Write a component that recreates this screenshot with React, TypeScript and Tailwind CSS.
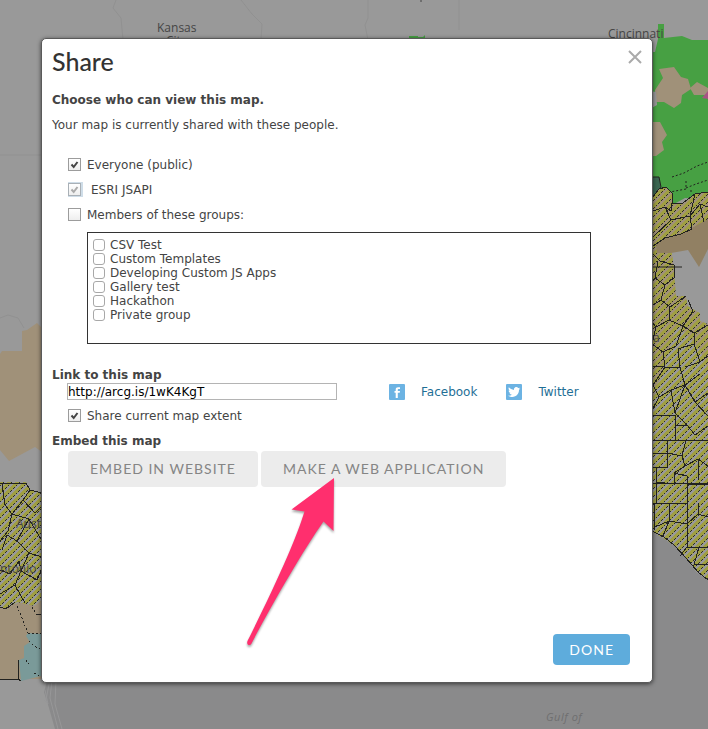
import React, { useState } from "react";

const groups = [
  "CSV Test",
  "Custom Templates",
  "Developing Custom JS Apps",
  "Gallery test",
  "Hackathon",
  "Private group",
];

function MapBackdrop() {
  return (
    <svg
      aria-hidden="true"
      className="absolute inset-0 size-full"
      viewBox="0 0 708 729"
      preserveAspectRatio="xMinYMin slice"
    >
      <defs>
        <pattern id="hatch" width="8" height="8" patternUnits="userSpaceOnUse">
          <rect width="8" height="8" fill="#a09f42" />
          <g shapeRendering="crispEdges">
            <path d="M-2 2 L2 -2 M-2 10 L10 -2 M6 10 L10 6" stroke="#999999" strokeWidth="2" />
            <path d="M-2 8 L8 -2 M4 10 L10 4" stroke="#2c2c26" strokeWidth="1" strokeDasharray="4 1" />
          </g>
        </pattern>
        <pattern id="hatchTan" width="8" height="8" patternUnits="userSpaceOnUse">
          <rect width="8" height="8" fill="#a09f42" />
          <g shapeRendering="crispEdges">
            <path d="M-2 2 L2 -2 M-2 10 L10 -2 M6 10 L10 6" stroke="#a09179" strokeWidth="2" />
            <path d="M-2 8 L8 -2 M4 10 L10 4" stroke="#2c2c26" strokeWidth="1" strokeDasharray="4 1" />
          </g>
        </pattern>
      </defs>

      <rect width="708" height="729" fill="#999999" />
      <path
        d="M50 670 L44 692 L49 708 L55 729 H708 V580 L696 572 L686 558 L674 545 L664 537 L650 530 L640 520 V670 Z"
        fill="#8a8a8b"
      />
      <path d="M52 680 L50 698 L58 729 M56 680 L55 704 L62 729 M45 690 L48 704 L44 700 M49 684 L46 700" fill="none" stroke="#979798" />

      <g fill="none" stroke="#919191">
        <path d="M116 0 L113 8 L121 18 L123 40 M241 0 L252 14 L262 24 L261 40 M368 0 V18 L365 25 L368 40 M459 0 V30" />
        <path d="M0 155 H42 M0 318 L8 315 L18 318 L24 328" />
      </g>
      <path d="M421 0 v2" fill="none" stroke="#444444" />

      <path d="M0 354 L2 351 H22 V331 L27 330 L37 323 L42 328 V452 L35 447 L9 461 L0 450 Z" fill="#a09179" />
      <path d="M0 604 L16 604 L42 590 V679 H0 Z" fill="#a09179" />
      <path d="M28 633 L41 634 V676 L21 681 L19 660 L24 658 V646 L30 642 L26 636 Z" fill="#7a9a99" />
      <path d="M0 482 H26 L30 490 L42 493 V600 L34 606 L17 602 L6 609 L0 607 Z" fill="url(#hatch)" />
      <g fill="none" stroke="#22221f" shapeRendering="crispEdges">
        <path d="M0 483 H26 L30 490 L42 493 M2 484 L5 505 L12 514 L23 500 L30 490 M12 514 L8 531 L0 541 M23 500 L35 513 L42 506 M12 514 L29 519 L42 541 M29 519 L17 541 L7 535 L2 550 M17 541 L29 553 L21 571 L37 580 M29 553 L42 557 M0 570 L10 574 L19 561 L21 571 L15 585 L0 594 M15 585 L25 603 M37 580 L42 568 M15 602 L6 609 L0 607" />
        <path d="M17 606 L28 633 M32 607 L36 614 M28 633 L41 634 M29 641 L34 646 L41 649 M26 660 L29 664 M34 673 L40 676" strokeDasharray="2 2" />
        <path d="M36 614 H42 M0 679 H18 V660 M18 679 L21 681" />
      </g>

      <path d="M409 39 V36 H418 V37 H423 L425 35 V39 Z" fill="#47a043" />
      <path d="M640 52 H655 L658 39 V24 H664 V38 L682 36 L692 40 H708 V200 L685 198 L674 204 L665 201 L652 195 H640 Z" fill="#47a043" />
      <path d="M655 90 L663 78 L659 69 L674 67 L681 77 L688 79 L691 89 L682 95 L681 103 L674 108 L664 102 H655 Z" fill="#a09179" />
      <path d="M690 88 L697 82 L708 88 V95 H694 Z M650 122 H660 L667 135 L662 142 L664 150 L656 156 H650 Z" fill="#a09179" />
      <path d="M702 98 L708 91 V99 Z" fill="#a75283" />
      <path d="M650 91 L656 92 L657 105 L650 109 Z" fill="#999999" />
      <path d="M650 177 H659 L661 187 L656 197 H650 Z" fill="#3b6651" stroke="#22221f" />

      <path d="M652 198 L659 189 L666 187 L672 193 L672 203 L683 203 L695 194 L708 192 V220 L692 237 L675 242 L671 250 L675 265 L686 296 L688 306 L700 313 V321 L708 324 V580 L698 572 L686 558 L674 545 L664 537 L650 530 V197 Z" fill="url(#hatchTan)" />
      <path d="M672 252 L689 249 L708 256 V322 L700 313 L688 306 L686 296 L676 296 L674 270 Z" fill="#999999" />
      <path d="M653 400 L677 324 L700 350 L708 370 V580 L698 572 L686 558 L674 545 L650 530 V415 Z" fill="url(#hatch)" />
      <path d="M657 253 L656 243 L665 238 L681 234 L708 219 V249 L699 267 L688 250 L671 253 Z" fill="#918063" />
      <path d="M650 267 H682" stroke="#22221f" />
      <g fill="none" stroke="#22221f" strokeWidth="1" shapeRendering="crispEdges">
        <path d="M652 198 L659 189 L666 187 L672 193 L672 203 L683 203 L695 194 L708 192" />
        <path d="M650 212 L665 207 L671 211 L672 203 M665 207 L671 220 L653 237 M671 220 L690 216 L695 194 M690 216 L692 229 M692 229 L681 234 L665 238 L650 248 M690 216 L700 204 L708 207 M700 204 L704 222" />
        <path d="M652 253 L660 261 L674 265 M658 261 L655 278 L665 285 L675 277 L674 265 M655 278 L650 284 M665 285 L661 300 L670 307 L686 296 M661 300 L650 307 M670 307 L669 320 L683 326 L693 311 L688 300 M669 320 L656 327 L650 320" />
        <path d="M656 327 L652 344 L663 352 L676 346 L683 326 L694 333 L708 325 M663 352 L665 367 L650 366 M665 367 H680 L678 349 L694 344 V333 M694 344 L700 362 L708 356 M680 367 L685 385 L700 374 M700 362 L685 367 M665 367 L653 385 L659 397 L671 390 L685 385 L695 402 L708 416 M659 397 L650 414 M671 390 L675 413 L685 385 M695 402 L708 393" />
        <path d="M650 415 H675 V440 H650 M675 425 H687 L695 435 L708 426 M675 440 H708 M687 425 L675 413 M667 440 V453 H652 V467 H667 V453 M667 453 L682 456 L686 440 M682 456 L685 466 L674 473 V484 L656 482 V467 M685 466 L698 459 L708 466 M650 483 H708 M674 473 L687 476 V503 H650 M687 484 H708 M698 459 V480 M656 482 V503" />
        <path d="M654 503 V530 M669 503 V521 L655 527 M669 521 L687 524 V503 M687 524 L698 514 L708 517 M698 514 L699 503 M669 521 L663 536 M687 524 V547 H708 M687 547 L680 556 M699 547 L694 565 L708 564 M650 530 L664 537 L674 545 L686 558 L698 572 L708 580" />
      </g>
      <path
        d="M672 177 L684 173 L697 166 L708 162 M686 181 V189 L670 192 M686 188 L696 184 L708 180 M691 192 V188"
        fill="none"
        stroke="#22221f"
        strokeDasharray="2 2"
      />

      <g className="font-['Open_Sans',sans-serif]" fill="#454545" fontSize="12">
        <text x="157" y="32">Kansas</text>
        <text x="166" y="45">City</text>
        <text x="608" y="38">Cincinnati</text>
        <text x="16" y="528">Austin</text>
        <text x="0" y="573">ntonio</text>
        <text x="653" y="342">a</text>
      </g>
      <text x="546" y="721" className="font-['Open_Sans',sans-serif] italic tracking-wider" fontSize="11" fill="#6f6f70">
        Gulf of
      </text>
    </svg>
  );
}

type CheckProps = {
  label: string;
  defaultChecked?: boolean;
  disabled?: boolean;
};

function CheckRow({ label, defaultChecked, disabled }: CheckProps) {
  return (
    <label className={`flex h-[25px] items-center ${disabled ? "gap-[10px]" : "gap-[6px]"}`}>
      <span className="grid size-[13px] shrink-0 place-items-center">
        <input
          type="checkbox"
          defaultChecked={defaultChecked}
          disabled={disabled}
          className="peer col-start-1 row-start-1 size-[13px] appearance-none border border-[#9c9c9c] bg-linear-to-b from-white to-[#eeeeee] disabled:border-[#a9b0b6] disabled:shadow-[1px_0_0_1px_#cfdde8]"
        />
        <svg
          viewBox="0 0 13 13"
          aria-hidden="true"
          className="pointer-events-none invisible col-start-1 row-start-1 size-[13px] text-[#444444] peer-checked:visible peer-disabled:text-[#aaaaaa]"
        >
          <path d="M3.5 6.5 L5.7 9 L9.5 4" fill="none" stroke="currentColor" strokeWidth="2" />
        </svg>
      </span>
      {label}
    </label>
  );
}

function FacebookIcon() {
  return (
    <svg viewBox="0 0 16 16" className="size-4" aria-hidden="true">
      <rect width="16" height="16" rx="1" fill="#6cb3e3" />
      <path d="M6.700 14 V8.800 H5.500 V7 H6.700 V5.600 C6.700 4 7.600 3.200 9 3.200 H11 V5 H9.700 C9 5 8.800 5.300 8.800 5.900 V7 H11 L10.700 8.800 H8.800 V14 Z" fill="#fff" />
    </svg>
  );
}

function TwitterIcon() {
  return (
    <svg viewBox="0 0 16 16" className="size-4" aria-hidden="true">
      <rect width="16" height="16" rx="1" fill="#6cb3e3" />
      <path
        d="M14.200 4.400 C13.700 4.600 13.300 4.700 12.800 4.800 C13.300 4.500 13.700 4 13.900 3.400 C13.400 3.700 12.900 3.900 12.300 4 C11.300 2.900 9.900 2.900 9 3.500 C8.100 4.100 7.800 5.100 8 5.900 C5.900 5.800 4.100 4.800 2.900 3.300 C2.200 4.500 2.600 5.900 3.700 6.700 C3.300 6.700 2.900 6.600 2.600 6.400 C2.600 7.600 3.500 8.700 4.700 8.900 C4.300 9 4 9 3.600 9 C3.900 10 4.900 10.700 5.900 10.700 C4.900 11.500 3.400 11.900 2 11.700 C8 15.300 13.200 10.900 13 5.800 C13.500 5.400 13.900 4.900 14.200 4.400 Z"
        fill="#fff"
      />
    </svg>
  );
}

function Pointer() {
  return (
    <svg
      viewBox="242 474 100 180"
      aria-hidden="true"
      className="pointer-events-none absolute top-[435px] left-[200px] h-[180px] w-[100px] drop-shadow-[0_2px_1px_rgba(0,0,0,0.35)]"
    >
      <path
        d="M334 478 L291.500 509.500 L304.500 511.500 C298 533 283 570 247.500 641 C246 645 250 646.500 251.500 643.500 C275 599 304 549 323.500 521.500 L333.500 531 Z"
        fill="#ff2f6e"
      />
    </svg>
  );
}

const grayButton =
  "h-9 rounded bg-[#ececec] px-[22px] font-['Lato',sans-serif] text-sm tracking-[1px] text-[#858585]";

export default function App() {
  const [link, setLink] = useState("http://arcg.is/1wK4KgT");

  return (
    <main className="relative min-h-screen overflow-hidden pt-[38px] pr-[55px] pb-[46px] pl-[41px] font-['Verdana','DejaVu_Sans',sans-serif] text-xs text-[#444444]">
      <MapBackdrop />
      <section
        role="dialog"
        aria-labelledby="share-title"
        className="relative rounded-[5px] border border-[#5a5a5a] bg-white px-[10px] pt-[6px] pb-[17px] shadow-[0_1px_4px_rgba(0,0,0,0.6)]"
      >
        <header className="flex items-start justify-between">
          <h1 id="share-title" className="font-['Lato',sans-serif] text-[25px] leading-8 font-medium text-[#333333]">
            Share
          </h1>
          <button type="button" aria-label="Close" className="mt-[5px] text-[#aaaaaa]">
            <svg viewBox="0 0 14 14" className="size-[14px]" aria-hidden="true">
              <path d="M1 1 L13 13 M13 1 L1 13" stroke="currentColor" strokeWidth="2" />
            </svg>
          </button>
        </header>

        <h2 className="mt-[14px] leading-[18px] font-bold">Choose who can view this map.</h2>
        <p className="mt-[7px] leading-[18px]">Your map is currently shared with these people.</p>

        <div className="mt-[18px] pl-4">
          <CheckRow label="Everyone (public)" defaultChecked />
          <CheckRow label="ESRI JSAPI" defaultChecked disabled />
          <CheckRow label="Members of these groups:" />
        </div>

        <ul className="mt-[5px] mr-[51px] ml-[35px] min-h-28 border border-[#333333] px-[5px] pt-[5px]">
          {groups.map((group) => (
            <li key={group}>
              <label className="flex h-[14px] items-center gap-[5px]">
                <input
                  type="checkbox"
                  className="size-3 shrink-0 appearance-none rounded-[3px] border border-[#a8a8a8] bg-white checked:bg-[#5eacdc]"
                />
                {group}
              </label>
            </li>
          ))}
        </ul>

        <h2 className="mt-[23px] leading-4 font-bold">
          <label htmlFor="map-link">Link to this map</label>
        </h2>
        <div className="flex items-center pl-[15px]">
          <input
            id="map-link"
            type="text"
            value={link}
            onChange={(event) => setLink(event.target.value)}
            className="h-[17px] w-[270px] border border-[#b4b4b4] bg-white text-black"
          />
          <nav className="ml-[52px] flex items-center gap-[29px] text-[#1f6f96]">
            <a href="#facebook" className="flex items-center gap-4">
              <FacebookIcon />
              Facebook
            </a>
            <a href="#twitter" className="flex items-center gap-4">
              <TwitterIcon />
              Twitter
            </a>
          </nav>
        </div>
        <div className="mt-[3px] pl-4">
          <CheckRow label="Share current map extent" defaultChecked />
        </div>

        <h2 className="mt-[5px] leading-4 font-bold">Embed this map</h2>
        <div className="mt-[2px] flex flex-wrap gap-[3px] pl-4">
          <button type="button" className={grayButton}>
            EMBED IN WEBSITE
          </button>
          <button type="button" className={grayButton}>
            MAKE A WEB APPLICATION
          </button>
        </div>

        <footer className="mt-[147px] flex justify-end pr-3">
          <button
            type="button"
            className="h-[31px] rounded bg-[#5eacdc] px-4 font-['Lato',sans-serif] text-sm tracking-[1px] text-white"
          >
            DONE
          </button>
        </footer>
        <Pointer />
      </section>
    </main>
  );
}
